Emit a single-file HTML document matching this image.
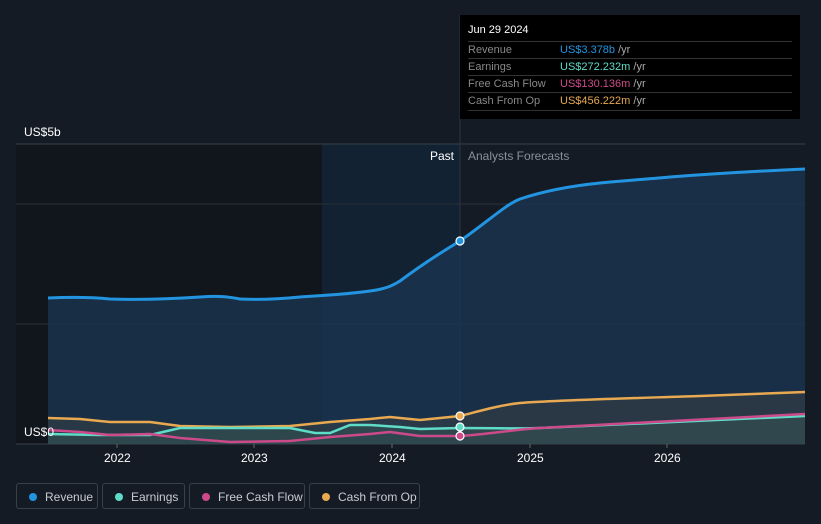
<!DOCTYPE html>
<html><head><meta charset="utf-8"><style>
body{margin:0;background:#151b25;font-family:"Liberation Sans",sans-serif;width:821px;height:524px;overflow:hidden;position:relative}
.tt{position:absolute;left:460px;top:15px;width:340px;height:104px;background:#000;color:#fff;font-size:11px}
.tt .h{position:absolute;left:8px;top:9px;font-size:11px}
.tt .r{position:absolute;left:8px;width:324px;height:17px;border-top:1px solid #333;color:#888}
.tt .r span{position:absolute;left:92px;top:2px}
.tt .r b{font-weight:normal;position:absolute;left:0;top:2px}
.leg{position:absolute;top:483px;height:26px;border:1px solid #3a404a;border-radius:3px;color:#c8ccd2;font-size:12px;line-height:26px;box-sizing:border-box;padding-left:28px}
.leg i{position:absolute;left:12px;top:9px;width:8px;height:8px;border-radius:50%}
.ax{position:absolute;color:#fff;font-size:12px}
</style></head><body>
<svg width="821" height="524" style="position:absolute;left:0;top:0">
<rect x="16" y="144" width="444" height="300" fill="#11151c"/>
<rect x="322" y="144" width="138" height="300" fill="#122232"/>
<line x1="16" y1="144" x2="805" y2="144" stroke="#3a404a"/>
<line x1="16" y1="204" x2="805" y2="204" stroke="#2a303a"/>
<line x1="16" y1="324" x2="805" y2="324" stroke="#2a303a"/>
<line x1="16" y1="444" x2="805" y2="444" stroke="#3a404a"/>
<line x1="460" y1="15" x2="460" y2="444" stroke="#2a3644"/>
<path d="M48,298 C70,297 90,297 110,299 C140,300 170,299 200,297 C215,296 225,296 240,299 C260,300 280,299 300,297 C330,295 350,294 370,291 C385,289 392,286 400,281 C420,266 440,253 460,241 C490,220 505,205 520,199 C550,189 580,185 600,183 C630,180 650,179 670,177 C710,174 760,171 805,169 L805,444 L48,444Z" fill="#1a3450" fill-opacity=".8"/>
<path d="M48,298 C70,297 90,297 110,299 C140,300 170,299 200,297 C215,296 225,296 240,299 C260,300 280,299 300,297 C330,295 350,294 370,291 C385,289 392,286 400,281 C420,266 440,253 460,241 C490,220 505,205 520,199 C550,189 580,185 600,183 C630,180 650,179 670,177 C710,174 760,171 805,169" fill="none" stroke="#2394e0" stroke-width="3"/>
<path d="M48,418 L80,419 110,422 150,422 180,426 230,427 290,426 330,422 370,419 390,417 420,420 460,416 C480,411 500,405 520,403 C560,400 640,398 700,396 L805,392 L805,444 L48,444Z" fill="#4a4a44" fill-opacity=".35"/>
<path d="M48,418 L80,419 110,422 150,422 180,426 230,427 290,426 330,422 370,419 390,417 420,420 460,416 C480,411 500,405 520,403 C560,400 640,398 700,396 L805,392" fill="none" stroke="#e8a951" stroke-width="2.5"/>
<path d="M48,434 L100,435 150,435 180,428 230,428 290,428 315,433 330,433 350,425 370,425 400,427 420,429 460,428 C500,428 520,429 540,428 C600,425 700,420 805,416 L805,444 L48,444Z" fill="#3a6a60" fill-opacity=".3"/>
<path d="M48,434 L100,435 150,435 180,428 230,428 290,428 315,433 330,433 350,425 370,425 400,427 420,429 460,428 C500,428 520,429 540,428 C600,425 700,420 805,416" fill="none" stroke="#5fdcc8" stroke-width="2.5"/>
<path d="M48,430 L80,432 110,435 150,434 180,438 230,442 290,441 330,437 370,434 390,432 420,436 460,436 C490,434 510,430 540,428 C600,424 700,419 805,414" fill="none" stroke="#cc4a8a" stroke-width="2.5"/>
<circle cx="460" cy="241" r="4" fill="#2394e0" stroke="#fff" stroke-width="1.2"/>
<circle cx="460" cy="416" r="4" fill="#e8a951" stroke="#fff" stroke-width="1.2"/>
<circle cx="460" cy="427" r="4" fill="#5fdcc8" stroke="#fff" stroke-width="1.2"/>
<circle cx="460" cy="436" r="4" fill="#cc4a8a" stroke="#fff" stroke-width="1.2"/>
<g stroke="#666"><line x1="117" y1="444" x2="117" y2="448"/><line x1="254" y1="444" x2="254" y2="448"/><line x1="392" y1="444" x2="392" y2="448"/><line x1="530" y1="444" x2="530" y2="448"/><line x1="667" y1="444" x2="667" y2="448"/></g>
</svg>
<div class="ax" style="left:24px;top:125px">US$5b</div>
<div class="ax" style="left:24px;top:425px">US$0</div>
<div class="ax" style="left:430px;top:149px">Past</div>
<div class="ax" style="left:468px;top:149px;color:#8a9099">Analysts Forecasts</div>
<div class="ax" style="left:104px;top:451px">2022</div>
<div class="ax" style="left:241px;top:451px">2023</div>
<div class="ax" style="left:379px;top:451px">2024</div>
<div class="ax" style="left:517px;top:451px">2025</div>
<div class="ax" style="left:654px;top:451px">2026</div>
<div class="tt">
<div class="h">Jun 29 2024</div>
<div class="r" style="top:26px"><b>Revenue</b><span style="color:#2394e0">US$3.378b <em style="font-style:normal;color:#aaa">/yr</em></span></div>
<div class="r" style="top:43px"><b>Earnings</b><span style="color:#5fdcc8">US$272.232m <em style="font-style:normal;color:#aaa">/yr</em></span></div>
<div class="r" style="top:60px"><b>Free Cash Flow</b><span style="color:#cc4a8a">US$130.136m <em style="font-style:normal;color:#aaa">/yr</em></span></div>
<div class="r" style="top:77px;border-bottom:1px solid #333"><b>Cash From Op</b><span style="color:#e8a951">US$456.222m <em style="font-style:normal;color:#aaa">/yr</em></span></div>
</div>
<div class="leg" style="left:16px;width:82px"><i style="background:#2394e0"></i>Revenue</div>
<div class="leg" style="left:102px;width:83px"><i style="background:#5fdcc8"></i>Earnings</div>
<div class="leg" style="left:189px;width:116px"><i style="background:#cc4a8a"></i>Free Cash Flow</div>
<div class="leg" style="left:309px;width:111px"><i style="background:#e8a951"></i>Cash From Op</div>
</body></html>
